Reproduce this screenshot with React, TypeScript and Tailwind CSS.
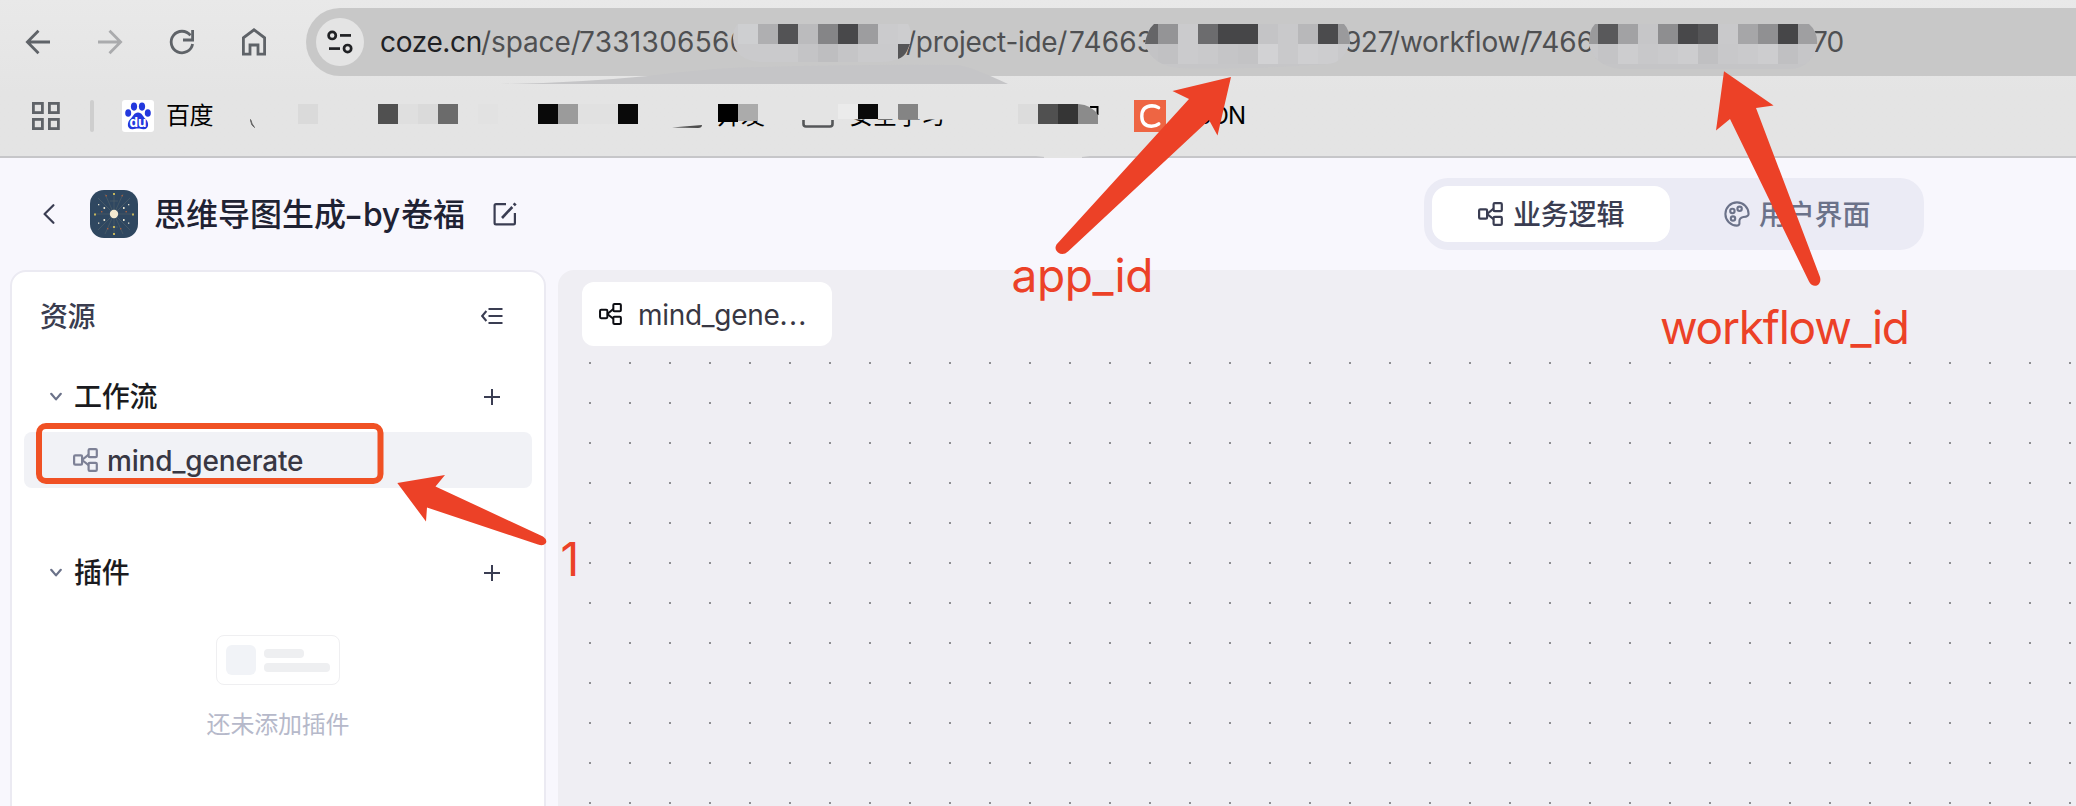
import React from "react";

const UI = "font-['Inter','Noto_Sans_CJK_SC',sans-serif]";

type Tile = [number, number, number, number, string];

function row(x: number, y: number, h: number, colors: string[]): Tile[] {
  return colors.map((c, i) => [x + i * 20, y, 20, h, c]);
}

function Tiles({ tiles }: { tiles: Tile[] }) {
  return (
    <>
      {tiles.map(([x, y, w, h, c], i) => (
        <rect key={i} x={x} y={y} width={w} height={h} fill={c} />
      ))}
    </>
  );
}

function FlowIcon({ className = "" }: { className?: string }) {
  return (
    <svg viewBox="0 0 25 24" fill="none" stroke="currentColor" strokeWidth="2.2" className={className}>
      <rect x="1.1" y="7.4" width="8" height="9.2" rx="1.2" />
      <rect x="15.6" y="1.1" width="8.2" height="8" rx="1.2" />
      <rect x="15.6" y="14.9" width="8.2" height="8" rx="1.2" />
      <path d="M9 12 L15.6 6.6 M9 12 L15.6 17.2" />
    </svg>
  );
}

function Chevron() {
  return (
    <svg viewBox="0 0 12 10" fill="none" stroke="#6b7289" strokeWidth="2.2" strokeLinecap="round" strokeLinejoin="round" className="h-2.5 w-3">
      <path d="M1.2 1.8 L6 7.4 L10.8 1.8" />
    </svg>
  );
}

function Plus() {
  return (
    <svg viewBox="0 0 18 18" fill="none" stroke="#3a3d52" strokeWidth="2" className="size-[18px]">
      <path d="M9 1 V17 M1 9 H17" />
    </svg>
  );
}

function Toolbar() {
  return (
    <div className="flex h-[84px] items-center pl-6">
      <svg viewBox="0 0 28 28" fill="none" stroke="#5f6368" strokeWidth="2.8" className="size-7">
        <path d="M26 14 H4 M14.5 2.8 L3.4 14 L14.5 25.2" />
      </svg>
      <svg viewBox="0 0 28 28" fill="none" stroke="#aaabad" strokeWidth="2.8" className="ml-[45px] size-7">
        <path d="M1 14 H23 M12.5 2.8 L23.6 14 L12.5 25.2" />
      </svg>
      <svg viewBox="0 0 28 28" fill="none" stroke="#5f6368" strokeWidth="2.8" className="ml-[43px] size-7">
        <path d="M24.6 16 A10.8 10.8 0 1 1 22.5 7.4" />
        <path d="M24.6 2 V12 H15" />
      </svg>
      <svg viewBox="0 0 28 28" fill="none" stroke="#5f6368" strokeWidth="2.8" className="ml-11 size-7">
        <path d="M3.4 26.2 V9.8 L14 1.8 L24.6 9.8 V26.2 H18 V17 H10 V26.2 Z" />
      </svg>
      <div className="ml-[38px] flex h-[68px] flex-1 items-center rounded-l-full bg-[#c8c8c8] pl-2.5">
        <div className="flex size-12 items-center justify-center rounded-full bg-[#e4e4e4]">
          <svg viewBox="0 0 26 26" fill="none" stroke="#202124" strokeWidth="2.7" className="size-[26px]">
            <circle cx="5.2" cy="6.4" r="3.6" />
            <path d="M13 6.4 H24" />
            <path d="M2 19.6 H13" />
            <circle cx="20.6" cy="19.6" r="3.6" />
          </svg>
        </div>
        <div className="ml-4 flex whitespace-nowrap text-[28px] leading-[68px] text-[#4f5052]">
          <span className="w-[101px] tracking-[-0.35px] text-[#202124]">coze.cn</span>
          <span className="w-[98px] tracking-[-0.1px]">/space/</span>
          <span className="w-[327px] tracking-[0.3px]">7331306560</span>
          <span className="w-[163px] tracking-[-0.3px]">/project-ide/</span>
          <span className="w-[275px] tracking-[0.2px]">74663</span>
          <span className="w-[46px] tracking-[-0.5px]">927</span>
          <span className="w-[137px] tracking-[-0.2px]">/workflow/</span>
          <span className="w-[285px] tracking-[0px]">7466</span>
          <span className="tracking-[-0.9px]">70</span>
        </div>
      </div>
    </div>
  );
}

function Bookmarks() {
  return (
    <div className="flex h-16 items-center pl-8 text-2xl text-black">
      <svg viewBox="0 0 28 28" fill="none" stroke="#5f6368" strokeWidth="2.8" className="size-7">
        <rect x="1.4" y="1.4" width="9" height="9.2" />
        <rect x="17.4" y="1.4" width="9" height="9.2" />
        <rect x="1.4" y="17.4" width="9" height="9.2" />
        <rect x="17.4" y="17.4" width="9" height="9.2" />
      </svg>
      <div className="ml-[30px] h-8 w-1 rounded-full bg-[#cecece]" />
      <div className="ml-7 flex size-8 items-center justify-center rounded-[3px] bg-white">
        <svg viewBox="0 0 26 28" fill="#2338dd" className="h-7 w-[26px]">
          <ellipse cx="9" cy="4.6" rx="3.1" ry="4.1" />
          <ellipse cx="17" cy="4.6" rx="3.1" ry="4.1" />
          <ellipse cx="3.2" cy="11" rx="3" ry="3.8" />
          <ellipse cx="22.8" cy="11" rx="3" ry="3.8" />
          <path d="M13 10.6 C9 10.6 8.4 14.4 5.4 17 C2 20 1.4 27.4 7.6 27.2 C10 27.2 11 26.6 13 26.6 C15 26.6 16 27.2 18.4 27.2 C24.6 27.4 24 20 20.6 17 C17.6 14.4 17 10.6 13 10.6 Z" />
          <text x="13" y="25" textAnchor="middle" fontSize="13.5" fontWeight="700" fill="#fff" fontFamily="Inter">du</text>
        </svg>
      </div>
      <span className="ml-3 w-[551px] tracking-[-0.5px]">百度</span>
      <span className="w-[132px]">开发</span>
      <span className="w-[285px] tracking-[0px]">安全学习</span>
      <div className="flex size-8 shrink-0 items-center justify-center bg-[#ee6543]">
        <svg viewBox="0 0 32 32" fill="none" stroke="#fff" strokeWidth="3.4" strokeLinecap="round" className="size-8">
          <path d="M24.600 7.600 Q21.500 5.800 18 5.800 Q7.800 6.200 7.800 16.200 Q7.800 26.200 17.500 26.200 Q21.800 26.200 24.800 23.800" />
        </svg>
      </div>
      <span className="ml-[17px] tracking-[-0.8px]">JSON</span>
    </div>
  );
}

function Redactions() {
  return (
    <svg width="2076" height="160" viewBox="0 0 2076 160" className="pointer-events-none absolute left-0 top-0">
      <defs>
        <clipPath id="m1"><path d="M738 24 H908 Q912 30 910 44 Q906 62 880 62 H760 Q734 60 733 38 Q733 28 738 24 Z" /></clipPath>
        <clipPath id="m2"><path d="M1154 24 H1344 Q1350 30 1350 42 Q1344 64 1326 64 Q1250 70 1180 68 Q1152 66 1145 44 Q1147 30 1154 24 Z" /></clipPath>
        <clipPath id="m3"><path d="M1595 24 H1809 Q1818 32 1817 44 Q1812 68 1790 69 H1620 Q1594 66 1589 44 Q1589 30 1595 24 Z" /></clipPath>
      </defs>
      <path d="M500 84 Q575 83 648 76 Q690 70 740 67.500 L800 66 Q900 64 958 65 Q972 67 1008 84 Z" fill="#c5c5c7" />
      <g clipPath="url(#m1)">
        <rect x="730" y="20" width="190" height="50" fill="#cacacc" />
        <Tiles tiles={row(738, 24, 20, ["#cecfd1", "#afafb1", "#535355", "#bbbbbd", "#858587", "#48484a", "#9d9d9f", "#cbcbcd", "#cdcdcf"])} />
        <Tiles tiles={row(798, 44, 18, ["#c4c4c6", "#bebec0", "#c5c5c7"])} />
      </g>
      <path d="M898 44 H910 L907 51 Q904 57 898 59 Z" fill="#555557" />
      <g clipPath="url(#m2)">
        <rect x="1140" y="20" width="215" height="50" fill="#c6c6c8" />
        <Tiles tiles={row(1138, 24, 20, ["#656567", "#949496", "#cbcbcd", "#6c6c6e", "#464648", "#464648", "#c4c4c6", "#c9c9cb", "#b8b8ba", "#4b4b4d", "#9a9a9c"])} />
        <Tiles tiles={row(1138, 44, 20, ["#c3c3c5", "#c1c1c3", "#cbcbcd", "#c9c9cb", "#c5c5c7", "#c3c3c5", "#d2d2d4", "#c9c9cb", "#cfcfd1", "#cdcdcf", "#c9c9cb"])} />
      </g>
      <g clipPath="url(#m3)">
        <rect x="1580" y="20" width="240" height="50" fill="#c5c5c7" />
        <Tiles tiles={row(1578, 24, 20, ["#9a9a9c", "#59595b", "#a2a2a4", "#c6c6c8", "#8e8e90", "#48484a", "#555557", "#c9c9cb", "#a6a6a8", "#909092", "#464648", "#9f9fa1"])} />
        <Tiles tiles={row(1578, 44, 20, ["#c8c8ca", "#c4c4c6", "#cdcdcf", "#c8c8ca", "#cacacc", "#cdcdcf", "#c0c0c2", "#c8c8ca", "#cacacc", "#cdcdcf", "#c0c0c2", "#c6c6c8"])} />
      </g>
      <rect x="700" y="100" width="300" height="19.5" fill="#e4e4e4" />
      <rect x="700" y="100" width="80" height="21" fill="#e4e4e4" />
      <path d="M250.500 119.500 Q250.800 125.500 254.500 127.500 Q251.800 124 250.500 119.500 Z" fill="#666" stroke="#666" />
      <Tiles
        tiles={[
          [298, 104, 20, 20, "#dadada"],
          [378, 104, 20, 20, "#505050"],
          [398, 104, 20, 20, "#dfdfdf"],
          [418, 104, 20, 20, "#dadada"],
          [438, 104, 20, 20, "#6b6b6b"],
          [478, 104, 20, 20, "#e2e2e2"],
          [538, 104, 20, 20, "#090909"],
          [558, 104, 20, 20, "#9b9b9b"],
          [578, 104, 40, 20, "#e1e1e1"],
          [618, 104, 20, 20, "#090909"],
          [718, 104, 20, 18, "#000000"],
          [738, 104, 20, 17, "#ababab"],
          [838, 104, 20, 15, "#ebebeb"],
          [858, 104, 20, 15, "#090909"],
          [898, 104, 20, 15, "#848484"],
          [1018, 104, 20, 20, "#dcdcdc"],
          [1038, 104, 20, 20, "#505050"],
          [1058, 104, 20, 20, "#353535"],
        ]}
      />
      <path d="M1090 107 H1097.500 V115" fill="none" stroke="#000" strokeWidth="2" />
      <path d="M1078 104 Q1092 105 1098 115 V124 H1078 Z" fill="#8b8b8b" />
      <path d="M672 127.500 L702 125 Q702 128 698 128 Z" fill="#4d4d4d" />
      <path d="M803.500 120 V124 Q803.500 126.500 806 126.500 H830 Q832.500 126.500 832.500 124 V120" fill="none" stroke="#555759" strokeWidth="2.6" />
      <path d="M1036 156 H1090 Q1064 160 1036 156 Z" fill="#e4e4e4" />
      <rect x="1044" y="155" width="38" height="3" fill="#e4e4e4" />
    </svg>
  );
}

function AppHeader() {
  return (
    <div className="flex h-[112px] items-center pl-[43px]">
      <svg viewBox="0 0 12 20" fill="none" stroke="#3a3d52" strokeWidth="2.2" strokeLinecap="round" strokeLinejoin="round" className="h-5 w-3">
        <path d="M10.400 1.200 L1.600 10 L10.400 18.800" />
      </svg>
      <svg viewBox="0 0 48 48" className="ml-[35px] size-12">
        <rect width="48" height="48" rx="14" fill="#2f4760" />
        <g stroke="#6b7670" strokeWidth="0.600" opacity="0.600">
          <path d="M24 3 V45 M4 24 H44 M8 8 L40 40 M40 8 L8 40 M15 4 L33 44 M33 4 L15 44 M20 11 H28 M20 37 H28" />
        </g>
        <g fill="#c3b45c">
          <rect x="23" y="3" width="2" height="2" />
          <rect x="23" y="43" width="2" height="2" />
          <rect x="23" y="36" width="2" height="2" />
          <rect x="4" y="23.500" width="2" height="2" />
          <rect x="42" y="23.500" width="2" height="2" />
        </g>
        <g fill="#e5e2cf">
          <rect x="13.500" y="17" width="1.600" height="2" />
          <rect x="33" y="17" width="1.600" height="2" />
          <rect x="13.500" y="29" width="1.600" height="2" />
          <rect x="33" y="29" width="1.600" height="2" />
          <rect x="8" y="14" width="1.300" height="1.300" />
          <rect x="38" y="14" width="1.300" height="1.300" />
          <rect x="8" y="32.500" width="1.300" height="1.300" />
          <rect x="38" y="32.500" width="1.300" height="1.300" />
        </g>
        <g fill="#a9603f">
          <rect x="15.500" y="5" width="1.400" height="1.400" />
          <rect x="31.500" y="5" width="1.400" height="1.400" />
          <rect x="11" y="21" width="1.400" height="1.400" />
          <rect x="35.500" y="21" width="1.400" height="1.400" />
          <rect x="17" y="38" width="1.400" height="1.400" />
          <rect x="30" y="38" width="1.400" height="1.400" />
        </g>
        <circle cx="24" cy="24" r="4.200" fill="#f5ead0" />
      </svg>
      <div className="ml-4 flex w-[339px] whitespace-nowrap pt-px text-[32px] font-medium leading-[48px] text-[#1f2233]">
        <span className="w-[192px]">思维导图生成</span>
        <span className="w-[17px] origin-left scale-x-[0.85] font-['Liberation_Sans'] font-bold">–</span>
        <span className="w-[38px] tracking-[-0.5px]">by</span>
        <span>卷福</span>
      </div>
      <svg viewBox="0 0 24 24" fill="none" stroke="#3a3d52" strokeWidth="2.200" className="size-6">
        <path d="M13 2.100 H3 Q1.600 2.100 1.600 3.500 V21 Q1.600 22.400 3 22.400 H20.500 Q21.900 22.400 21.900 21 V11" />
        <path d="M9 16 L19.300 5" strokeWidth="2.600" />
        <path d="M20.800 3.300 L22.600 1.500" strokeWidth="3" />
      </svg>
      <div className="ml-[907px] flex h-[72px] w-[500px] items-center rounded-3xl bg-[#ebebf5] px-2 text-[28px] font-medium">
        <div className="flex h-14 w-[238px] items-center rounded-2xl bg-white pl-[46px] text-[#3a3d52]">
          <FlowIcon className="h-6 w-[25px]" />
          <span className="ml-[10px] pt-0.5 tracking-[-0.200px]">业务逻辑</span>
        </div>
        <div className="flex h-14 flex-1 items-center pl-[54px] text-[#6b7289]">
          <svg viewBox="0 0 26 26" fill="none" stroke="currentColor" strokeWidth="2.100" className="size-[26px]">
            <path d="M13 1.400 A11.600 11.600 0 0 0 13 24.600 C15.400 24.600 15.600 23 15.400 21 C15.200 18 16.600 16.400 19.400 16 C22.400 15.800 24.600 15.400 24.600 13 A11.600 11.600 0 0 0 13 1.400 Z" />
            <circle cx="8.400" cy="10" r="2.200" />
            <circle cx="15.600" cy="7.800" r="2.200" />
            <circle cx="9" cy="17.600" r="2.200" />
          </svg>
          <span className="ml-[9px] pt-0.5 tracking-[-0.200px]">用户界面</span>
        </div>
      </div>
    </div>
  );
}

function Section({ title }: { title: string }) {
  return (
    <div className="flex h-12 items-center pl-[38px] pr-[43px]">
      <Chevron />
      <span className="ml-3 flex-1 text-[28px] font-medium leading-[48px] tracking-[-0.300px] text-[#1a1b20]">{title}</span>
      <Plus />
    </div>
  );
}

function Sidebar() {
  return (
    <aside className="h-[600px] w-[536px] shrink-0 rounded-2xl border-2 border-[#ebeaf2] bg-white">
      <div className="flex h-[88px] items-center pl-[28px] pr-[41px]">
        <span className="flex-1 pt-0.5 text-[28px] font-medium tracking-[-0.500px] text-[#3a3d4f]">资源</span>
        <svg viewBox="0 0 22 18" fill="none" stroke="#3a3d52" strokeWidth="2" className="h-[18px] w-[22px]">
          <path d="M5.400 4 L1.200 9 L5.400 14 M7.500 2 H21.500 M7.500 9 H21.500 M7.500 16 H21.500" />
        </svg>
      </div>
      <div className="mt-[13px]">
        <Section title="工作流" />
      </div>
      <div className="mx-3 mt-[11px] flex h-14 items-center rounded-lg bg-[#f1f2f6] pl-[49px]">
        <FlowIcon className="h-6 w-[25px] text-[#7d8196]" />
        <span className="ml-[9px] pt-0.5 text-[28px] font-medium tracking-[-0.180px] text-[#383743]">mind_generate</span>
      </div>
      <div className="mt-[61px]">
        <Section title="插件" />
      </div>
      <div className="mt-[38px] flex flex-col items-center">
        <div className="flex h-[50px] w-[124px] items-center gap-2 rounded-lg border border-[#efeff1] pl-[9px]">
          <div className="size-[30px] rounded-md bg-[#f1f3f7]" />
          <div className="flex flex-col gap-[5px]">
            <div className="h-[9px] w-10 rounded-[4px] bg-[#eeeff1]" />
            <div className="h-[9px] w-[66px] rounded-[4px] bg-[#eeeff1]" />
          </div>
        </div>
        <span className="mt-[22px] text-2xl leading-9 tracking-[-0.200px] text-[#b6b9ca]">还未添加插件</span>
      </div>
    </aside>
  );
}

function Canvas() {
  return (
    <main className="ml-3 h-[600px] flex-1 rounded-tl-2xl bg-[#efeef3] pl-6 pt-3">
      <div className="flex h-16 w-[250px] items-center rounded-xl bg-white pl-[17px]">
        <FlowIcon className="h-[22px] w-[23px] text-[#0c0d12]" />
        <span className="ml-4 whitespace-nowrap pt-0.5 text-[28px] tracking-[-0.300px] text-[#383743]">
          mind_gene<span className="tracking-[1.400px]">...</span>
        </span>
      </div>
      <svg width="1494" height="460" className="mt-2">
        <defs>
          <pattern id="dots" width="40" height="40" patternUnits="userSpaceOnUse">
            <rect x="7" y="8" width="2" height="2" fill="#8f8f93" />
          </pattern>
        </defs>
        <rect width="1494" height="460" fill="url(#dots)" />
      </svg>
    </main>
  );
}

function Annotations() {
  return (
    <svg width="2076" height="806" viewBox="0 0 2076 806" className="pointer-events-none absolute left-0 top-0" fill="#ec4127">
      <rect x="39" y="426" width="341.500" height="55" rx="7" fill="none" stroke="#f05124" strokeWidth="6" />
      <path d="M397.300 483 L445 475 L435.500 486.500 L543 536.500 Q548 540 545.500 543.500 Q543 546.500 538 544.500 L427 507.500 L426 521.500 Z" />
      <path d="M1231 77 L1172.500 91 L1189 99 L1056.500 244.500 Q1054 249 1058 252.500 Q1063 256 1068 251.500 L1209 120 L1217.500 135.500 Z" />
      <path d="M1724 71.300 L1773.600 105.500 L1756 108 L1820 277 Q1821.500 283 1817 285.500 Q1812 287 1809 281.500 L1730 119 L1716 130.500 Z" />
      <g fontFamily="Inter" fontSize="46">
        <text x="1011.500" y="292" textLength="142">app_id</text>
        <text x="1660" y="344" textLength="250">workflow_id</text>
        <text x="560.500" y="576">1</text>
      </g>
    </svg>
  );
}

export default function App() {
  return (
    <div className={`relative h-[806px] w-[2076px] overflow-hidden bg-[#f8f7fd] ${UI}`}>
      <header className="relative h-[158px] border-b-2 border-[#c6c6c9] bg-linear-to-b from-[#e9e9e9] to-[#e4e4e4] to-60%">
        <Toolbar />
        <Bookmarks />
        <Redactions />
      </header>
      <AppHeader />
      <div className="flex pl-2.5">
        <Sidebar />
        <Canvas />
      </div>
      <Annotations />
    </div>
  );
}
